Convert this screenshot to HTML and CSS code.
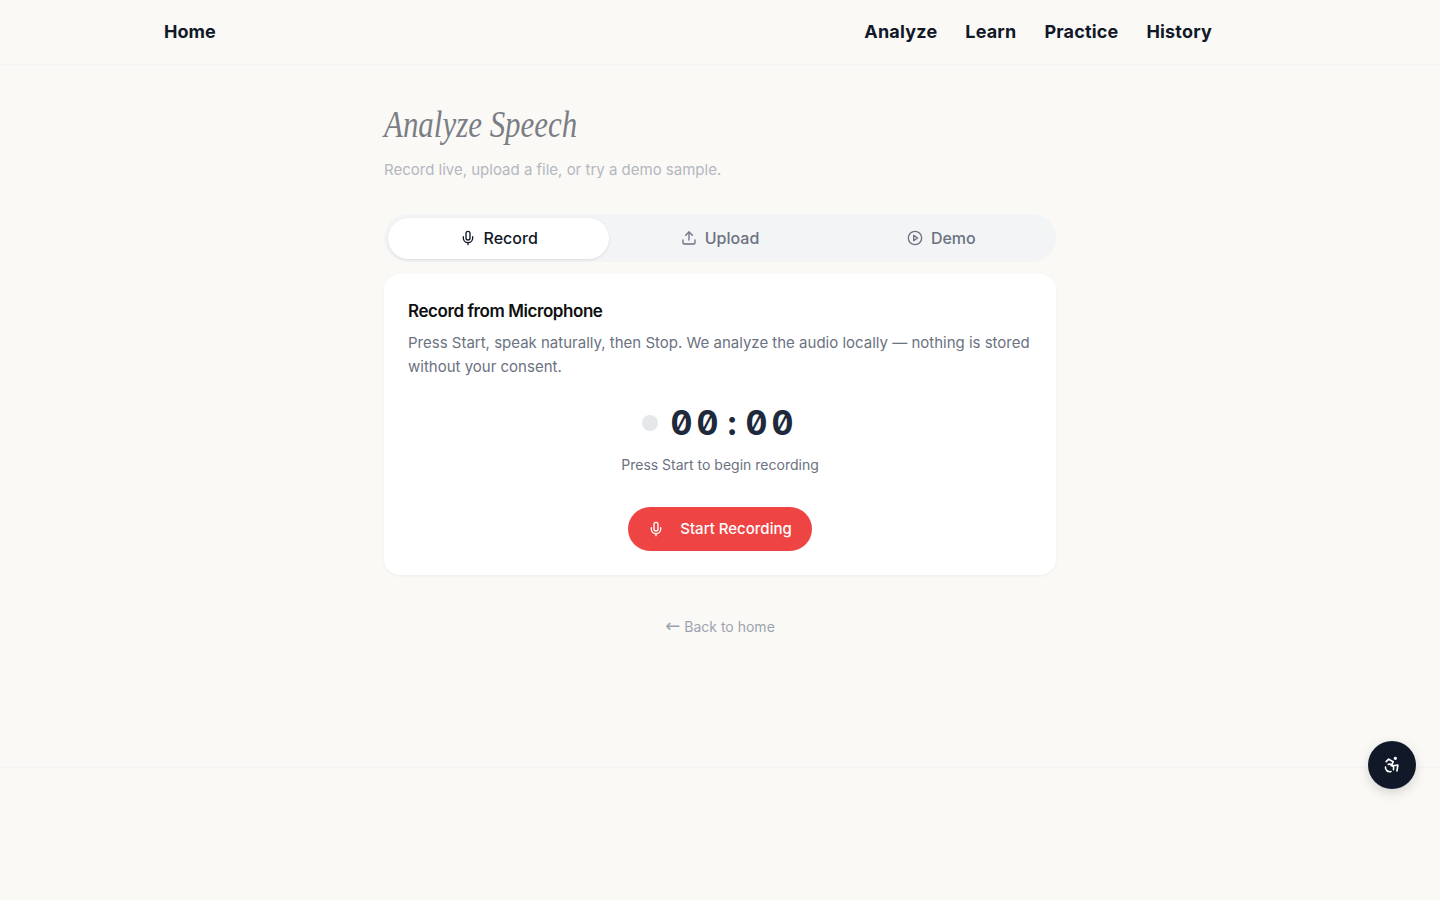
FILE: index.html
```html
<!DOCTYPE html>
<html lang="en">
<head>
    <meta charset="UTF-8">
    <meta name="viewport" content="width=device-width, initial-scale=1.0">
    <title>Analyze Speech</title>
    <link rel="stylesheet" href="styles.css">
</head>

<body>
    <header class="topbar">
        <a class="nav-link" href="#">Home</a>
        <nav class="nav-right">
            <a class="nav-link" href="#">Analyze</a>
            <a class="nav-link" href="#">Learn</a>
            <a class="nav-link" href="#">Practice</a>
            <a class="nav-link" href="#">History</a>
        </nav>
    </header>

    <main class="content">
        <h1 class="page-title">Analyze Speech</h1>
        <p class="page-sub">Record live, upload a file, or try a demo sample.</p>

        <div class="tabs">
            <button class="tab tab-active">
                <svg class="icon" viewBox="0 0 24 24"><path d="M12 2a3 3 0 0 0-3 3v7a3 3 0 0 0 6 0V5a3 3 0 0 0-3-3Z"/><path d="M19 10v2a7 7 0 0 1-14 0v-2"/><path d="M12 19v3"/></svg>
                Record
            </button>
            <button class="tab">
                <svg class="icon" viewBox="0 0 24 24"><path d="M21 15v4a2 2 0 0 1-2 2H5a2 2 0 0 1-2-2v-4"/><path d="M17 8l-5-5-5 5"/><path d="M12 3v12"/></svg>
                Upload
            </button>
            <button class="tab">
                <svg class="icon" viewBox="0 0 24 24"><circle cx="12" cy="12" r="10"/><path d="M10 8l6 4-6 4V8Z"/></svg>
                Demo
            </button>
        </div>

        <section class="card">
            <h2 class="card-title">Record from Microphone</h2>
            <p class="card-text">Press Start, speak naturally, then Stop. We analyze the audio locally — nothing is stored without your consent.</p>

            <div class="timer">
                <span class="timer-dot"></span>
                <span class="timer-value">00<span class="timer-colon">:</span>00</span>
            </div>
            <p class="timer-hint">Press Start to begin recording</p>

            <button class="start-btn">
                <svg class="icon" viewBox="0 0 24 24"><path d="M12 2a3 3 0 0 0-3 3v7a3 3 0 0 0 6 0V5a3 3 0 0 0-3-3Z"/><path d="M19 10v2a7 7 0 0 1-14 0v-2"/><path d="M12 19v3"/></svg>
                Start Recording
            </button>
        </section>

        <a class="back-link" href="#"><span class="back-arrow">←</span>Back to home</a>
    </main>

    <footer class="footer"></footer>

    <button class="a11y-btn" aria-label="Accessibility">
        <svg viewBox="0 0 24 24"><circle cx="16" cy="4" r="1"/><path d="M18 19l1-7-6 1"/><path d="M5 8l3-3 5.5 3-2.5 5"/><path d="M4.2 14.5a5 5 0 0 0 6.5 5.3"/><path d="M13.8 17.5a5 5 0 0 0-6.3-6.3"/></svg>
    </button>
</body>
</html>
```

FILE: styles.css
```css
* {
    box-sizing: border-box;
}
body {
    font-family: Inter, "Liberation Sans", sans-serif;
    background: #faf9f6;
    color: #111827;
    margin: 0;
    min-height: 900px;
}
a {
    text-decoration: none;
}
.topbar {
    display: flex;
    justify-content: space-between;
    align-items: center;
    height: 65px;
    padding: 0 228px 2px 164px;
    border-bottom: 1px solid #f3f4f6;
}
.nav-right {
    display: flex;
    gap: 28px;
}
.nav-right .nav-link {
    letter-spacing: 0.18px;
}
.nav-link {
    font-size: 18px;
    font-weight: 700;
    color: #111827;
}
.content {
    width: 672px;
    height: 702px;
    margin: 0 auto;
    padding-top: 37px;
}
.page-title {
    font-family: "Liberation Serif", serif;
    font-style: italic;
    font-weight: 400;
    font-size: 37px;
    line-height: 45px;
    color: #7a7d85;
    margin: 0;
    transform: scaleX(0.836);
    transform-origin: left center;
}
.page-sub {
    font-size: 15px;
    line-height: 24px;
    color: #b4b7bf;
    margin: 11px 0 32px;
}
.tabs {
    display: flex;
    height: 48px;
    padding: 4px;
    background: #f3f4f6;
    border-radius: 24px;
}
.tab {
    flex: 1;
    display: flex;
    align-items: center;
    justify-content: center;
    gap: 8px;
    height: 41px;
    padding: 0 0 2px;
    border: none;
    background: none;
    border-radius: 21px;
    font-family: inherit;
    font-size: 16px;
    font-weight: 500;
    color: #6b7280;
}
.tab-active {
    background: #fff;
    color: #111827;
    box-shadow: 0 1px 3px rgba(0, 0, 0, 0.1);
}
.icon {
    width: 16px;
    height: 16px;
    fill: none;
    stroke: currentColor;
    stroke-width: 2;
    stroke-linecap: round;
    stroke-linejoin: round;
}
.card {
    display: flex;
    flex-direction: column;
    align-items: center;
    height: 301px;
    margin-top: 12px;
    padding: 24px;
    background: #fff;
    border-radius: 16px;
    box-shadow: 0 1px 3px rgba(0, 0, 0, 0.05);
}
.card-title {
    align-self: flex-start;
    font-size: 17px;
    line-height: 26px;
    font-weight: 600;
    letter-spacing: -0.43px;
    color: #0f0f0f;
    margin: 0;
}
.card-text {
    align-self: flex-start;
    font-size: 15px;
    line-height: 24px;
    color: #6b7280;
    margin: 7px 0 0;
}
.timer {
    display: flex;
    align-items: center;
    gap: 12px;
    margin-top: 24px;
    height: 40px;
}
.timer-dot {
    width: 16px;
    height: 16px;
    border-radius: 50%;
    background: #e5e7eb;
}
.timer-value {
    font-family: Inter, "DejaVu Sans Mono", monospace;
    font-variant-numeric: slashed-zero tabular-nums;
    font-weight: 700;
    font-size: 34px;
    line-height: 40px;
    letter-spacing: 4px;
    color: #1e293b;
}
.timer-colon {
    padding: 0 5px;
}
.timer-hint {
    font-size: 14px;
    line-height: 20px;
    color: #6b7280;
    margin: 12px 0 0;
}
.start-btn {
    display: flex;
    align-items: center;
    gap: 16px;
    height: 44px;
    margin-top: 32px;
    padding: 0 20px 1px;
    border: none;
    border-radius: 22px;
    background: #ef4444;
    color: #fff;
    font-family: inherit;
    font-size: 15px;
    font-weight: 500;
}
.back-link {
    display: block;
    margin-top: 42px;
    text-align: center;
    font-size: 14px;
    line-height: 20px;
    color: #9ca3af;
}
.back-arrow {
    font-family: "DejaVu Sans", sans-serif;
    font-size: 18px;
    line-height: 0;
    margin-right: 4px;
}
.footer {
    height: 133px;
    border-top: 1px solid #f3f4f6;
}
.a11y-btn {
    position: fixed;
    right: 24px;
    bottom: 111px;
    display: flex;
    align-items: center;
    justify-content: center;
    width: 48px;
    height: 48px;
    padding: 0;
    border: none;
    border-radius: 50%;
    background: #111827;
    box-shadow: 0 4px 12px rgba(0, 0, 0, 0.15);
}
.a11y-btn svg {
    width: 20px;
    height: 20px;
    fill: none;
    stroke: #fff;
    stroke-width: 2;
    stroke-linecap: round;
    stroke-linejoin: round;
}
```
